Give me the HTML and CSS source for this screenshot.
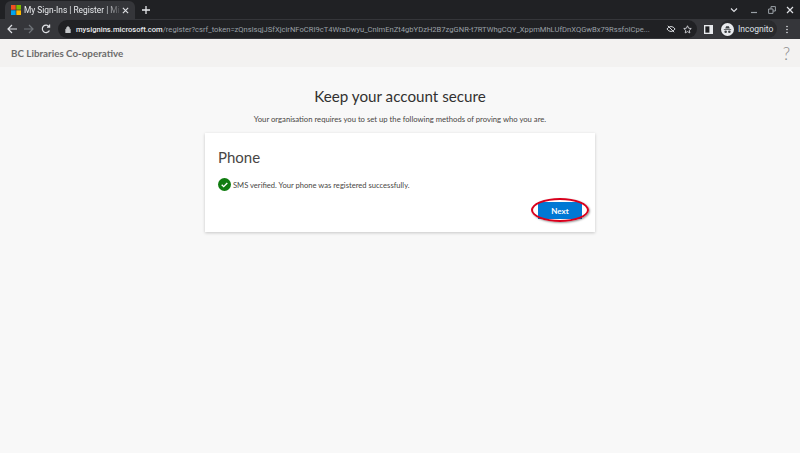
FILE: index.html
```html
<!DOCTYPE html>
<html lang="en">
<head>
    <meta charset="UTF-8">
    <meta name="viewport" content="width=device-width, initial-scale=1.0">
    <title>My Sign-Ins | Register</title>
    <link rel="stylesheet" href="styles.css">
</head>
<body>
    <div class="browser">
        <div class="tabstrip">
            <div class="tab">
                <svg class="favicon" viewBox="0 0 12 12" width="10" height="10">
                    <rect width="5.6" height="5.6" fill="#f25022"/>
                    <rect x="6.4" width="5.6" height="5.6" fill="#7fba00"/>
                    <rect y="6.4" width="5.6" height="5.6" fill="#00a4ef"/>
                    <rect x="6.4" y="6.4" width="5.6" height="5.6" fill="#ffb900"/>
                </svg>
                <span class="tab-title">My Sign-Ins | Register | Mi</span>
                <svg class="tab-close" viewBox="0 0 8 8" width="7" height="7"><path d="M1 1l6 6M7 1l-6 6" stroke="#dfe1e5" stroke-width="1.3"/></svg>
            </div>
            <svg class="new-tab" viewBox="0 0 10 10" width="8" height="8"><path d="M5 0v10M0 5h10" stroke="#e8eaed" stroke-width="1.6"/></svg>
            <div class="window-controls">
                <svg viewBox="0 0 8 8" width="8" height="8"><path d="M1 2.500l3 3 3-3" fill="none" stroke="#dfe1e5" stroke-width="1.100"/></svg>
                <svg viewBox="0 0 8 8" width="8" height="8"><path d="M1 6.500h6" stroke="#9aa0a6" stroke-width="1.200"/></svg>
                <svg viewBox="0 0 8 8" width="8" height="8"><path d="M.6 3h4.400v4.400H.6zM3 3V.6h4.400V5H5" fill="none" stroke="#9aa0a6" stroke-width="1"/></svg>
                <svg viewBox="0 0 8 8" width="8" height="8"><path d="M1 1l6 6M7 1l-6 6" stroke="#dfe1e5" stroke-width="1.200"/></svg>
            </div>
        </div>
        <div class="toolbar">
            <svg class="nav-icon" viewBox="0 0 10 10" width="10" height="10"><path d="M10 5H1M5 1L1 5l4 4" fill="none" stroke="#dfe1e5" stroke-width="1.200"/></svg>
            <svg class="nav-icon" viewBox="0 0 10 10" width="10" height="10"><path d="M0 5h9M5 1l4 4-4 4" fill="none" stroke="#70757a" stroke-width="1.200"/></svg>
            <svg class="nav-icon" viewBox="0 0 10 10" width="10" height="10"><path d="M8.400 6.400A3.700 3.700 0 1 1 8 2.600M8.600.6v2.600H6" fill="none" stroke="#dfe1e5" stroke-width="1.200"/></svg>
            <div class="omnibox">
                <svg class="lock" viewBox="0 0 8 9" width="6" height="7"><path d="M1 4h6v5H1zM2.200 4V2.600a1.800 1.800 0 0 1 3.600 0V4" fill="#c4c7c9" stroke="#c4c7c9"/></svg>
                <div class="url"><span class="url-host">mysignins.microsoft.com</span>/register?csrf_token=zQnslsqjJSfXjcirNFoCRI9cT4WraDwyu_CnlmEnZt4gbYDzH2B7zgGNR-t7RTWhgCQY_XppmMhLUfDnXQGwBx79RssfoICpe...</div>
                <svg class="omni-icon" viewBox="0 0 12 10" width="10" height="8"><path d="M1 5c2.600-4 7.400-4 10 0-2.600 4-7.400 4-10 0zM2 1l8 8" fill="none" stroke="#dfe1e5" stroke-width="1.200"/></svg>
                <svg class="omni-icon" viewBox="0 0 12 12" width="9" height="9"><path d="M6 1l1.500 3.300 3.500.4-2.600 2.400.7 3.500L6 8.800l-3.100 1.800.7-3.500L1 4.700l3.500-.4z" fill="none" stroke="#dfe1e5" stroke-width="1.100"/></svg>
            </div>
            <svg class="side-panel" viewBox="0 0 10 10" width="9" height="9"><path d="M0 0h10v10H0z" fill="#e8eaed"/><path d="M1.500 1.500h4.500v7H1.500z" fill="#202124"/></svg>
            <div class="profile">
                <span class="avatar">
                    <svg viewBox="0 0 12 12" width="11" height="11"><path d="M3.500 5l1-2.500h3l1 2.500zM2 5.500h8v.8H2z" fill="#3c4043"/><circle cx="4" cy="8.500" r="1.400" fill="#3c4043"/><circle cx="8" cy="8.500" r="1.400" fill="#3c4043"/></svg>
                </span>
                <span>Incognito</span>
            </div>
            <svg class="menu-dots" viewBox="0 0 4 12" width="4" height="9"><circle cx="2" cy="2" r="1.100" fill="#dfe1e5"/><circle cx="2" cy="6" r="1.100" fill="#dfe1e5"/><circle cx="2" cy="10" r="1.100" fill="#dfe1e5"/></svg>
        </div>
    </div>

    <header class="site-header">
        <span class="org-name">BC Libraries Co-operative</span>
        <span class="help">?</span>
    </header>

    <main class="content">
        <h1>Keep your account secure</h1>
        <p class="subtitle">Your organisation requires you to set up the following methods of proving who you are.</p>
        <section class="card">
            <h2>Phone</h2>
            <div class="status">
                <svg viewBox="0 0 14 14" width="13" height="13"><circle cx="7" cy="7" r="7" fill="#107c10"/><path d="M4 7.300l2.100 2 3.900-4" fill="none" stroke="#fff" stroke-width="1.500"/></svg>
                <span>SMS verified. Your phone was registered successfully.</span>
            </div>
            <div class="actions">
                <button class="next-btn">Next</button>
                <span class="highlight"></span>
            </div>
        </section>
    </main>
</body>
</html>
```

FILE: styles.css
```css
* {
    box-sizing: border-box;
}
html, body {
    height: 100%;
}
body {
    margin: 0;
    font-family: "Lato", "Open Sans", sans-serif;
    background-color: #f8f8f8;
    overflow: hidden;
    display: flex;
    flex-direction: column;
}
.browser {
    background-color: #202124;
    color: #dfe1e5;
    font-family: "Roboto", sans-serif;
}
.tabstrip {
    height: 19px;
    display: flex;
    align-items: flex-end;
    padding-left: 5px;
}
.tab {
    width: 130px;
    height: 18px;
    background-color: #35363a;
    border-radius: 6px 6px 0 0;
    display: flex;
    align-items: center;
    padding: 0 6px;
    font-size: 8.4px;
}
.favicon {
    flex: none;
}
.tab-title {
    flex: 1;
    white-space: nowrap;
    margin: 0 0 0 3px;
    color: #e8eaed;
    -webkit-mask-image: linear-gradient(to right, #000 82%, transparent 100%);
    mask-image: linear-gradient(to right, #000 82%, transparent 100%);
}
.tab-close {
    flex: none;
}
.new-tab {
    margin: 0 0 5px 7px;
}
.window-controls {
    margin-left: auto;
    display: flex;
    gap: 10px;
    padding-right: 6px;
    margin-bottom: 5px;
}
.window-controls svg:first-child {
    margin-right: 2px;
}
.toolbar {
    height: 20px;
    background-color: #35363a;
    display: flex;
    align-items: center;
    padding-left: 7px;
}
.nav-icon {
    flex: none;
    margin-right: 7px;
}
.omnibox {
    flex: none;
    width: 639px;
    height: 18px;
    background-color: #202124;
    border-radius: 9px;
    display: flex;
    align-items: center;
    padding: 0 5px 0 7px;
    font-size: 7.6px;
}
.lock {
    flex: none;
    margin-right: 5px;
}
.url {
    flex: 1;
    white-space: nowrap;
    color: #9aa0a6;
}
.url-host {
    color: #e8eaed;
    font-weight: 500;
}
.omni-icon {
    flex: none;
    margin-left: 7px;
}
.side-panel {
    flex: none;
    margin-left: 7px;
}
.profile {
    flex: none;
    height: 18px;
    width: 57px;
    margin-left: 7px;
    padding-left: 1px;
    border-radius: 9px;
    background-color: #292a2d;
    display: flex;
    align-items: center;
    gap: 4px;
    font-size: 8.5px;
}
.avatar {
    width: 13px;
    height: 13px;
    border-radius: 50%;
    background-color: #e8eaed;
    display: flex;
    align-items: center;
    justify-content: center;
}
.menu-dots {
    flex: none;
    margin-left: 8px;
}
.site-header {
    height: 28px;
    background-color: #f3f2f1;
    display: flex;
    align-items: center;
    justify-content: space-between;
    padding: 0 11px;
}
.org-name {
    font-size: 9.8px;
    font-weight: 700;
    color: #6b6b6b;
}
.help {
    font-size: 17px;
    color: #8a8a8a;
    font-weight: 300;
    margin-right: -1px;
}
.content {
    flex: 1;
    display: flex;
    flex-direction: column;
    align-items: center;
}
h1 {
    margin: 19px 0 0;
    font-size: 15.2px;
    font-weight: 400;
    line-height: 20px;
    color: #323130;
}
.subtitle {
    margin: 7px 0 0;
    font-size: 7.7px;
    line-height: 12px;
    color: #484644;
}
.card {
    width: 390px;
    height: 99px;
    margin-top: 8px;
    padding: 13px 13px 0;
    background-color: #fff;
    box-shadow: 0 1px 3px rgba(0, 0, 0, 0.2);
}
h2 {
    margin: 0;
    font-size: 15px;
    font-weight: 400;
    line-height: 22px;
    color: #484644;
}
.status {
    display: flex;
    align-items: center;
    gap: 2px;
    margin-top: 10px;
    font-size: 7.6px;
    color: #484644;
}
.actions {
    display: flex;
    justify-content: flex-end;
    margin-top: 11px;
    position: relative;
}
.next-btn {
    width: 44px;
    height: 17px;
    border: 0;
    padding: 0;
    background-color: #0078d4;
    color: #fff;
    font-family: inherit;
    font-size: 8px;
    font-weight: 700;
}
.highlight {
    position: absolute;
    right: -7px;
    top: -4px;
    width: 58px;
    height: 24px;
    border: 2px solid #d8001c;
    border-radius: 50%;
    box-shadow: 1px 1px 2px rgba(0, 0, 0, 0.4);
}
```
